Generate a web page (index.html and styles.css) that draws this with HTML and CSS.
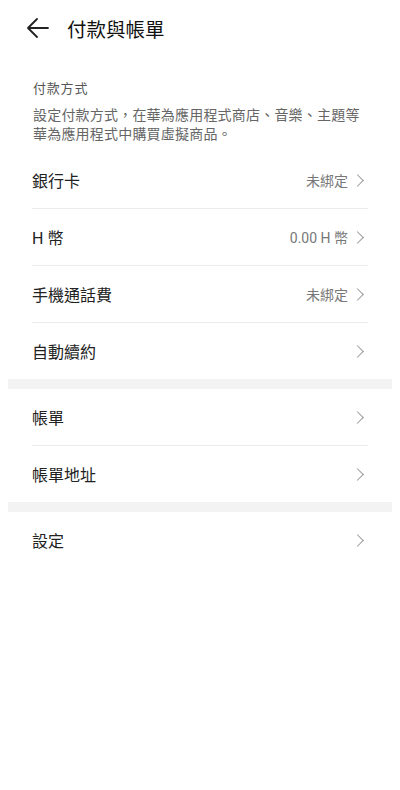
FILE: index.html
```html
<!DOCTYPE html>
<html lang="zh-Hant">
<head>
    <meta charset="UTF-8">
    <meta name="viewport" content="width=device-width, initial-scale=1.0">
    <title>付款與帳單</title>
    <link rel="stylesheet" href="styles.css">
</head>
<body>
    <div class="header">
        <svg class="back" width="22" height="20" viewBox="0 0 22 20">
            <path d="M1 10 H21 M10 1 L1 10 L10 19" fill="none" stroke="#222" stroke-width="1.8" stroke-linecap="round" stroke-linejoin="round"/>
        </svg>
        <h1>付款與帳單</h1>
    </div>

    <div class="intro">
        <div class="sub-title">付款方式</div>
        <p class="desc">設定付款方式，在華為應用程式商店、音樂、主題等華為應用程式中購買虛擬商品。</p>
    </div>

    <div class="group">
        <div class="row">
            <span class="label">銀行卡</span>
            <span class="value">未綁定</span>
            <span class="chev"></span>
        </div>
        <div class="row">
            <span class="label">H 幣</span>
            <span class="value">0.00 H 幣</span>
            <span class="chev"></span>
        </div>
        <div class="row">
            <span class="label">手機通話費</span>
            <span class="value">未綁定</span>
            <span class="chev"></span>
        </div>
        <div class="row">
            <span class="label">自動續約</span>
            <span class="chev"></span>
        </div>
    </div>

    <div class="band"></div>

    <div class="group">
        <div class="row">
            <span class="label">帳單</span>
            <span class="chev"></span>
        </div>
        <div class="row">
            <span class="label">帳單地址</span>
            <span class="chev"></span>
        </div>
    </div>

    <div class="band"></div>

    <div class="group">
        <div class="row">
            <span class="label">設定</span>
            <span class="chev"></span>
        </div>
    </div>
</body>
</html>
```

FILE: styles.css
```css
body {
    margin: 8px;
    background: #fff;
    font-family: Roboto, "Noto Sans CJK TC", sans-serif;
    color: #222;
}

.header {
    display: flex;
    align-items: center;
    height: 40px;
    padding-left: 19px;
}

.back {
    display: block;
}

.header h1 {
    margin: 0 0 0 18px;
    font-size: 19.5px;
    font-weight: 400;
    color: #111;
}

.intro {
    padding: 32px 25px 0 25px;
}

.sub-title {
    font-size: 13px;
    line-height: 18px;
    letter-spacing: 0.8px;
    color: #555;
}

.desc {
    margin: 8px 0 0 0;
    font-size: 14px;
    line-height: 19px;
    letter-spacing: 0.2px;
    color: #666;
}

.group {
    padding: 0 24px;
}

.intro + .group {
    margin-top: 8px;
}

.row {
    display: flex;
    align-items: center;
    height: 56px;
    border-bottom: 1px solid #ebebeb;
}

.row:last-child {
    border-bottom: none;
}

.label {
    flex: 1;
    font-size: 16px;
    color: #222;
}

.value {
    font-size: 14px;
    color: #777;
    margin-right: 5px;
}

.chev {
    width: 8px;
    height: 8px;
    border-top: 1.2px solid #999;
    border-right: 1.2px solid #999;
    transform: rotate(45deg);
    margin-right: 6px;
}

.band {
    height: 10px;
    background: #f3f3f3;
}
```
